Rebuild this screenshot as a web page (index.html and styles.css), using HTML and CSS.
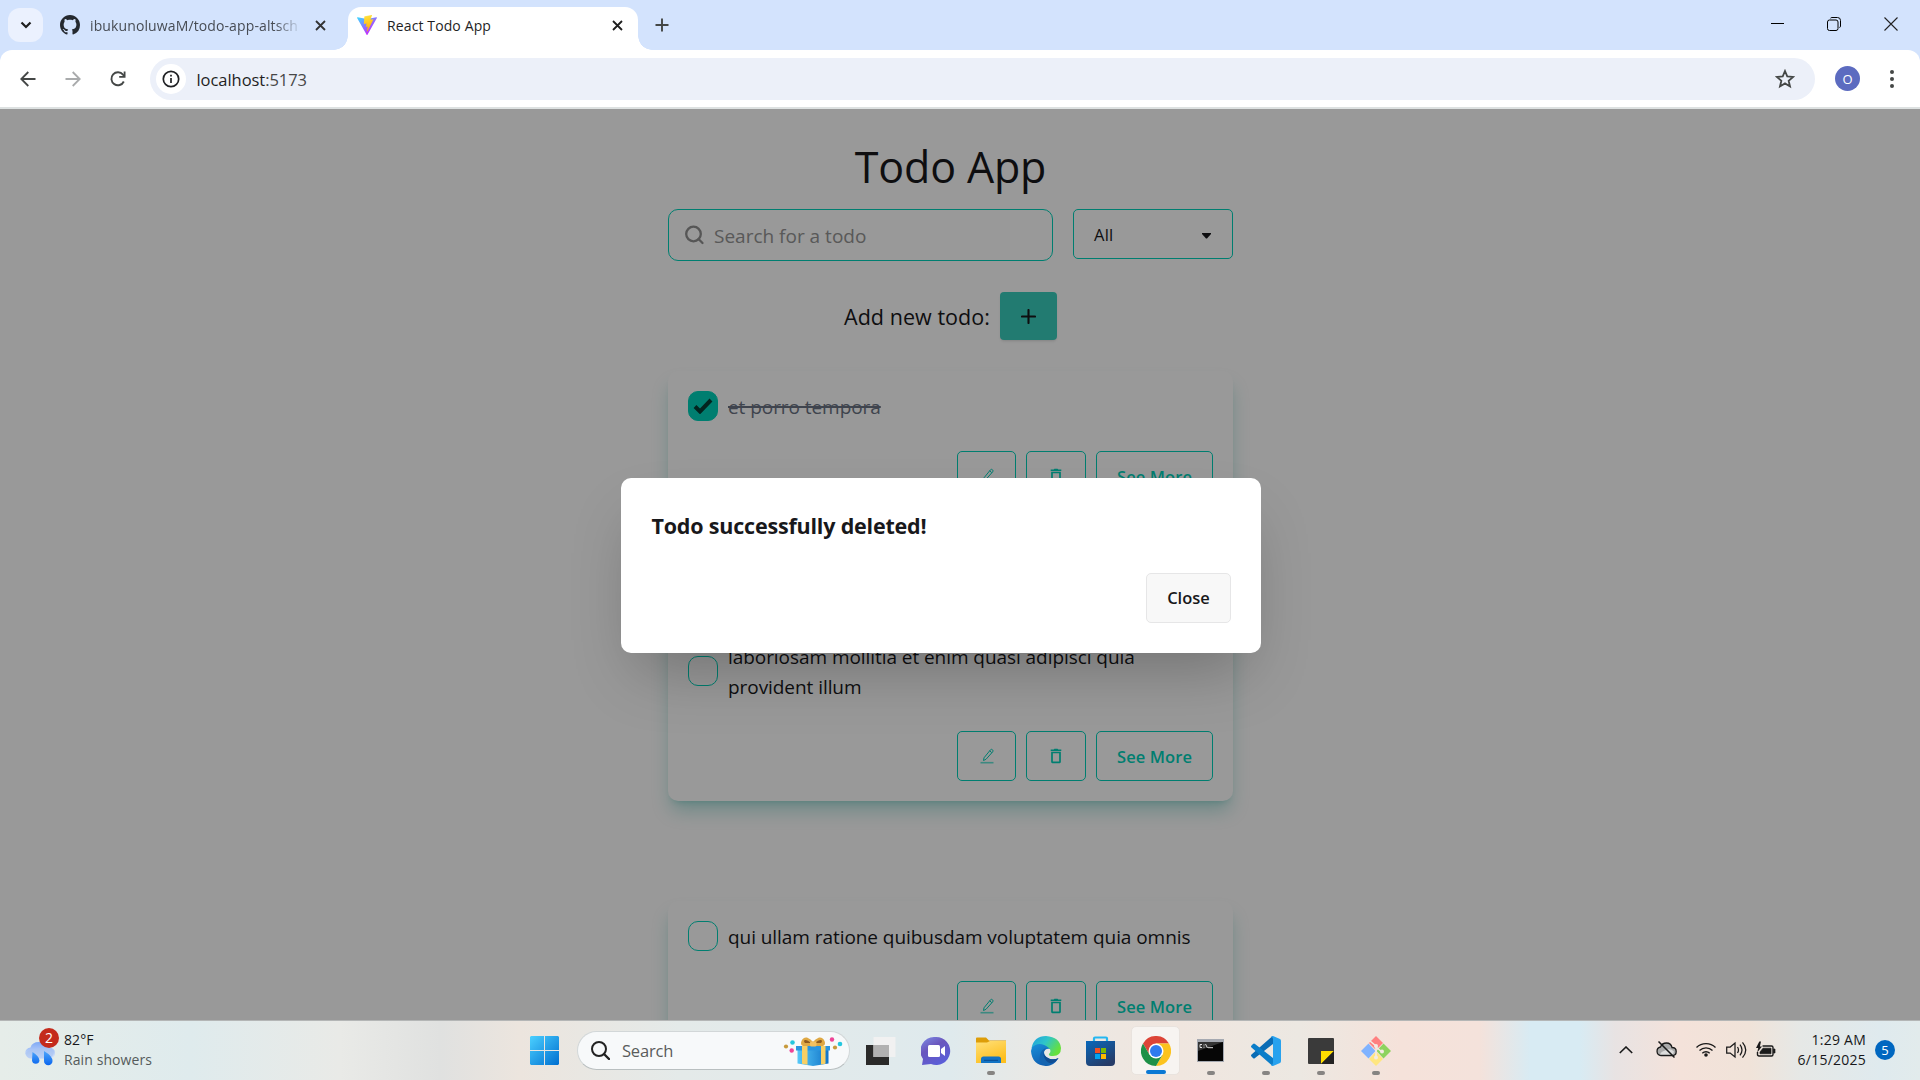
FILE: index.html
```html
<!DOCTYPE html>
<html lang="en">
<head>
<meta charset="utf-8">
<title>React Todo App</title>
<link rel="stylesheet" href="styles.css">
</head>
<body>
<div class="screen">
  <header class="browser">
    <div class="tabs">
      <button class="tab-search"><svg width="12" height="8" viewBox="0 0 12 8"><path d="M1.5 1.5 6 6l4.500-4.500" fill="none" stroke="#1f1f1f" stroke-width="2.200"/></svg></button>
      <div class="tab">
        <svg class="fav" width="20" height="20" viewBox="0 0 16 16"><path fill="#24292f" d="M8 0C3.580 0 0 3.580 0 8c0 3.540 2.290 6.530 5.470 7.590.4.070.55-.17.55-.38 0-.19-.01-.82-.01-1.490-2.010.37-2.530-.49-2.690-.94-.09-.23-.48-.94-.82-1.130-.28-.15-.68-.52-.01-.53.63-.01 1.080.58 1.230.82.72 1.210 1.870.87 2.330.66.07-.52.28-.87.51-1.070-1.780-.2-3.640-.89-3.640-3.950 0-.87.31-1.590.82-2.150-.08-.2-.36-1.020.08-2.120 0 0 .67-.21 2.200.82.64-.18 1.320-.27 2-.27s1.360.09 2 .27c1.530-1.040 2.200-.82 2.200-.82.44 1.100.16 1.920.08 2.120.51.56.82 1.270.82 2.150 0 3.070-1.870 3.750-3.650 3.950.29.25.54.73.54 1.480 0 1.070-.01 1.930-.01 2.200 0 .21.15.46.55.38A8 8 0 0 0 16 8c0-4.420-3.580-8-8-8z"/></svg>
        <span class="tab-title t-gh">ibukunoluwaM/todo-app-altsch</span>
        <svg class="x" width="11" height="11" viewBox="0 0 11 11"><path d="m1 1 9 9m0-9-9 9" stroke="#333" stroke-width="1.800"/></svg>
      </div>
      <div class="tab active">
        <svg class="fav" width="20" height="20" viewBox="0 0 256 257"><defs><linearGradient id="va" x1="0" x2=".6" y1=".1" y2=".85"><stop stop-color="#41d1ff"/><stop offset="1" stop-color="#bd34fe"/></linearGradient><linearGradient id="vb" x1=".4" x2=".55" y1="0" y2="1"><stop stop-color="#ffea83"/><stop offset=".1" stop-color="#ffdd35"/><stop offset="1" stop-color="#ffa800"/></linearGradient></defs><path fill="url(#va)" d="M255 38 134 254c-2 5-9 5-11 0L.800 38c-3-5 2-11 7-10l120 22q1 0 2 0L248 28c6-1 10 5 7 10z"/><path fill="url(#vb)" d="m185 0-88 17c-2 0-3 2-3 3l-6 92c0 2 2 4 5 4l24-6c3 0 5 2 4 4l-7 36c-1 2 1 5 4 4l15-5c3 0 5 2 4 5l-11 55c-1 4 4 5 6 2l76-151c1-2-1-5-4-5l-26 5c-2 1-4-2-3-4l17-53c1-2-1-4-3-3z"/></svg>
        <span class="tab-title t-react">React Todo App</span>
        <svg class="x" width="11" height="11" viewBox="0 0 11 11"><path d="m1 1 9 9m0-9-9 9" stroke="#1f1f1f" stroke-width="1.800"/></svg>
      </div>
      <svg class="plus" width="14" height="14" viewBox="0 0 14 14"><path d="M7 .5v13M.5 7h13" stroke="#444746" stroke-width="1.900"/></svg>
      <div class="win">
        <svg width="14" height="14" viewBox="0 0 14 14"><path d="M0 6.500h13" stroke="#000"/></svg>
        <svg width="14" height="14" viewBox="0 0 14 14"><path d="M.5 5a2 2 0 0 1 2-2H9a2 2 0 0 1 2 2v6.500a2 2 0 0 1-2 2H2.500a2 2 0 0 1-2-2zM3.500 1.200Q4 .5 5 .5h5.500a3 3 0 0 1 3 3V9q0 1-1 1.700" fill="none" stroke="#000"/></svg>
        <svg width="14" height="14" viewBox="0 0 14 14"><path d="m.5.5 13 13m0-13-13 13" stroke="#222" stroke-width="1.100"/></svg>
      </div>
    </div>
    <div class="toolbar">
      <svg class="nav" width="16" height="16" viewBox="0 0 16 16"><path d="M15.500 8H1.500M8.300 1 1.300 8l7 7" fill="none" stroke="#444746" stroke-width="1.800"/></svg>
      <svg class="nav" width="16" height="16" viewBox="0 0 16 16"><path d="M.5 8h14M7.700 1l7 7-7 7" fill="none" stroke="#a9abac" stroke-width="1.800"/></svg>
      <svg class="nav" width="16" height="16" viewBox="0 0 16 16"><path d="M13.800 10.500A6.500 6.500 0 1 1 13 3.700l1.500 1.800" fill="none" stroke="#444746" stroke-width="1.900"/><path d="M15.500.5v6.300H9.200V5h4.500V.5z" fill="#444746"/></svg>
      <div class="omnibox">
        <span class="info"><svg width="18" height="18" viewBox="0 0 18 18"><circle cx="9" cy="9" r="7.700" fill="none" stroke="#202124" stroke-width="1.700"/><path d="M9 8v5M9 4.800v1.800" stroke="#202124" stroke-width="1.700"/></svg></span>
        <span class="url">localhost<span class="port">:5173</span></span>
        <svg class="star" width="20" height="20" viewBox="0 0 20 20"><path d="m10 2 2.250 5.400 5.850.5-4.450 3.850 1.350 5.700L10 14.400l-5 3.050 1.350-5.700L1.900 7.900l5.850-.5z" fill="none" stroke="#444746" stroke-width="1.800"/></svg>
      </div>
      <span class="avatar">O</span>
      <svg class="dots" width="4" height="18" viewBox="0 0 4 18"><g fill="#444746"><circle cx="2" cy="2" r="2"/><circle cx="2" cy="9" r="2"/><circle cx="2" cy="16" r="2"/></g></svg>
    </div>
  </header>

  <main class="page">
    <div class="content">
      <h1>Todo App</h1>
      <div class="filters">
        <label class="search">
          <svg width="20" height="20" viewBox="0 0 20 20"><circle cx="8.500" cy="9" r="7.300" fill="none" stroke="#8f8f8f" stroke-width="2.300"/><path d="m13.500 14 4 4" stroke="#8f8f8f" stroke-width="2.300" stroke-linecap="round"/></svg>
          <span class="placeholder">Search for a todo</span>
        </label>
        <div class="select"><span>All</span><svg class="caret" width="9" height="6" viewBox="0 0 9 6"><path d="M0 0h9v1L5 5.500H4L0 1z" fill="#18181b"/></svg></div>
      </div>
      <div class="add"><span>Add new todo:</span><button class="btn-add"><svg width="15" height="15" viewBox="0 0 15 15"><path d="M7.500 1v13M1 7.500h13" stroke="#18181b" stroke-width="2.100" stroke-linecap="round"/></svg></button></div>

      <article class="card">
        <div class="row"><span class="check on"><svg width="20" height="16" viewBox="0 0 20 16"><path d="m2 8.500 5 5L18 2" fill="none" stroke="#053c35" stroke-width="4"/></svg></span><p class="done">et porro tempora</p></div>
        <div class="actions">
          <button class="btn edit"><svg class="ic" viewBox="0 0 14 16"><use href="#pen"/></svg></button>
          <button class="btn"><svg class="ic" viewBox="0 0 14 16"><use href="#bin"/></svg></button>
          <button class="btn more">See More</button>
        </div>
      </article>
      <article class="card">
        <div class="row"><span class="check"></span><p>laboriosam mollitia et enim quasi adipisci quia<br>provident illum</p></div>
        <div class="actions">
          <button class="btn edit"><svg class="ic" viewBox="0 0 14 16"><use href="#pen"/></svg></button>
          <button class="btn"><svg class="ic" viewBox="0 0 14 16"><use href="#bin"/></svg></button>
          <button class="btn more">See More</button>
        </div>
      </article>
      <article class="card">
        <div class="row"><span class="check"></span><p>qui ullam ratione quibusdam voluptatem quia omnis</p></div>
        <div class="actions">
          <button class="btn edit"><svg class="ic" viewBox="0 0 14 16"><use href="#pen"/></svg></button>
          <button class="btn"><svg class="ic" viewBox="0 0 14 16"><use href="#bin"/></svg></button>
          <button class="btn more">See More</button>
        </div>
      </article>
    </div>
    <div class="overlay">
      <div class="modal">
        <h2>Todo successfully deleted!</h2>
        <div class="modal-actions"><button class="close">Close</button></div>
      </div>
    </div>
  </main>

  <footer class="taskbar">
    <div class="weather">
      <div class="weather-ic">
        <svg width="32" height="28" viewBox="0 0 32 28"><defs><linearGradient id="cl" x2="0" y2="1"><stop stop-color="#7fa9f5"/><stop offset="1" stop-color="#dbe6fa"/></linearGradient><linearGradient id="dr" x2="0" y2="1"><stop stop-color="#4fa6fb"/><stop offset="1" stop-color="#0a66ee"/></linearGradient></defs><path d="M7 19.500a5.500 5.500 0 0 1-.5-11Q8 3 15 3t9 5.500q7 0 7 5.500t-6 5.500z" fill="url(#cl)"/><path d="M1.500 14.500q3-5 9.500-3 3-4 8-2 7-3 11 3-1 7-6 7H7q-4 0-5.500-5z" fill="#a9c3f0" opacity=".6"/><path d="M8.500 13q7 4.500 7 8.500a3.800 3.800 0 0 1-7.500 0zM20 12q8.500 5 8.500 10a4.200 4.200 0 0 1-8.500 0z" fill="url(#dr)"/></svg>
        <span class="alert">2</span>
      </div>
      <div class="weather-txt"><span>82°F</span><span class="rain">Rain showers</span></div>
    </div>

    <div class="apps">
      <span class="app"><svg width="29" height="29" viewBox="0 0 29 29"><defs><linearGradient id="wn" x1="0" y1="0" x2="29" y2="29" gradientUnits="userSpaceOnUse"><stop stop-color="#4bd0ff"/><stop offset="1" stop-color="#006fd0"/></linearGradient></defs><path fill="url(#wn)" d="M1 0h13v14H0V1zM15 0h13l1 1v13H15zM0 15h14v14H1l-1-1zM15 15h14v13l-1 1H15z"/></svg></span>
      <div class="tb-search">
        <svg width="19" height="19" viewBox="0 0 19 19"><circle cx="8" cy="8" r="7" fill="none" stroke="#222" stroke-width="2"/><path d="m13 13 5 5" stroke="#222" stroke-width="2.400" stroke-linecap="round"/></svg>
        <span class="tb-label">Search</span>
        <svg class="gift" width="60" height="30" viewBox="0 0 60 30"><defs><linearGradient id="gf"><stop stop-color="#56c8f8"/><stop offset="1" stop-color="#1173c8"/></linearGradient></defs><path d="M14.500 10h31v17.500L30 30l-15.500-2.500z" fill="url(#gf)"/><path d="M13 10h34v4.500H13z" fill="#2a95e0"/><path d="M19 10h5.500v18.700l-5.500-.9zM38 10h4.500v17.800l-4.500.7z" fill="#f8cf63"/><path d="M30 10H20q-3-1-1.500-5Q20 1 24 1.500q4 1.500 6 4.500 2-3 6-4.500 4-.5 5.500 3.500 1.500 4-1.500 5z" fill="#dfa844"/><path d="M28 7q-4-3.500-6-3t0 3zM32 7q4-3.500 6-3t0 3z" fill="#8f5a1e"/><rect x="27" y="5.500" width="6.500" height="5" rx="1.500" fill="#f3c060"/><g fill="#25c7df"><circle cx="9.500" cy="6.500" r="2.300"/><circle cx="57" cy="8" r="2.300"/></g><g fill="#ee4497"><circle cx="8.700" cy="14.500" r="2.200"/><circle cx="49" cy="3.500" r="2.200"/></g><g fill="#c79a3c"><circle cx="3" cy="10.500" r="2.100"/><circle cx="52" cy="11.500" r="2.100"/></g></svg>
      </div>
      <span class="app"><svg width="30" height="28" viewBox="0 0 30 28"><path d="M0 8h23v20H0z" fill="#2a2a29"/><path d="M7.500 0h22v20h-22z" fill="#f1f1f1"/><path d="M7.500 8H23v12H7.500z" fill="#b1b1b1"/></svg></span>
      <span class="app"><svg width="30" height="30" viewBox="0 0 30 30"><defs><linearGradient id="ct" x2=".6" y2="1"><stop stop-color="#7f8ee6"/><stop offset=".45" stop-color="#6a56bd"/><stop offset="1" stop-color="#5a5ed8"/></linearGradient></defs><path d="M15 1a14 14 0 1 1-5 27L1 29l1-6A14 14 0 0 1 15 1z" fill="url(#ct)"/><rect x="7" y="9" width="12" height="12" rx="1.500" fill="#fff"/><path d="m20 13 4-3v10l-4-3z" fill="#fff"/></svg></span>
      <span class="app run"><svg width="30" height="27" viewBox="0 0 30 27"><defs><linearGradient id="fo" x2=".5" y2="1"><stop stop-color="#ffe07a"/><stop offset="1" stop-color="#fdbf1e"/></linearGradient></defs><path d="M0 1.500Q0 .5 1 .5h9L13 3.500H30v6H0z" fill="#dd9d08"/><path d="M0 5.500h11L14 4h16v22H0z" fill="url(#fo)"/><path d="M5 26v-4q0-2.500 2.500-2.500h15Q25 19.500 25 22v4z" fill="#1273c4"/><path d="M8 23.300h14" stroke="#0a4a90"/></svg></span>
      <span class="app"><svg width="30" height="30" viewBox="0 0 30 30"><defs><linearGradient id="e1" x1="0" x2="1" y2=".5"><stop stop-color="#1f9ee0"/><stop offset=".5" stop-color="#2fc5c9"/><stop offset="1" stop-color="#66e03c"/></linearGradient><linearGradient id="e2" x2=".5" y2="1"><stop stop-color="#1a94dc"/><stop offset="1" stop-color="#0f5cb0"/></linearGradient></defs><path d="M0 15Q1 6 10 6q8 0 10 7-6-1-7 3 0 5 6 7 5 1 8.500-1Q23 30 15 30 1 29 0 15z" fill="url(#e2)"/><path d="M.500 12Q3 0 15 0q14 1 15 12 0 8-8 8-5 0-4-2 3-3 0-6Q8 4 .500 12z" fill="url(#e1)"/><path d="M13 14q-4 8 4 13 7 1 10.500-5-3.500 2-8.500 1-8-3-6-9z" fill="#104d92"/><path d="M15 30q-8-3-6-11 1-6 7-7-4 3-3.500 7 1.500 7 7.500 8.500-2 2-5 2.500z" fill="#1464b0"/></svg></span>
      <span class="app"><svg width="29" height="30" viewBox="0 0 29 30"><defs><linearGradient id="st" x2=".6" y2="1"><stop stop-color="#0868bb"/><stop offset="1" stop-color="#263c68"/></linearGradient></defs><path d="M8 6V2.500Q8 1.500 9 1.500h11q1 0 1 1V6" fill="none" stroke="#25b7f1" stroke-width="2.200"/><path d="M0 5h29v21q0 4-4 4H4q-4 0-4-4z" fill="url(#st)"/><path d="M9 12h5v5H9z" fill="#f25022"/><path d="M15 12h5v5h-5z" fill="#7fba00"/><path d="M9 18h5v5H9z" fill="#00a4ef"/><path d="M15 18h5v5h-5z" fill="#ffb900"/></svg></span>
      <span class="app current"><svg width="30" height="30" viewBox="0 0 30 30"><path d="M2 7.500A15 15 0 0 1 28 7.500H15L8.500 18.750z" fill="#dc4437"/><path d="M28 7.500A15 15 0 0 1 15 30L21.500 18.750 15 7.500z" fill="#fcc31e"/><path d="M2 7.500 8.500 18.750h13L15 30A15 15 0 0 1 2 7.500z" fill="#1e9048"/><circle cx="15" cy="15" r="7.500" fill="#fff"/><circle cx="15" cy="15" r="6" fill="#2f7bee"/></svg></span>
      <span class="app run"><svg width="27" height="23" viewBox="0 0 27 23"><path d="M0 0h27v23H0z" fill="#a5a9b1"/><path d="M1 3h25v19H1z" fill="#060606"/><path d="M1 3h25L1 12z" fill="#333"/><path d="M5 5.500H3v3h2M7 5.500v1m0 1.200v1M8.500 5l2 4M11 8.700h5" fill="none" stroke="#ddd"/></svg></span>
      <span class="app run"><svg width="30" height="30" viewBox="0 0 30 30"><path d="M22 0v8L4 22q-1 1-2 0L.5 20.500q-1-1 0-2L21 .5z" fill="#0a6cb5"/><path d="M22 30v-8L4 8Q3 7 2 8L.5 9.500q-1 1 0 2L21 29.500z" fill="#0c7ec9"/><path d="m22 0 7 3q1 .5 1 2v20q0 1.500-1 2l-7 3q-1.500 0-2-1 2 0 2-2V3q0-2-2-2 .5-1 2-1z" fill="#28a2ee"/></svg></span>
      <span class="app run"><svg width="26" height="26" viewBox="0 0 26 26"><rect width="26" height="26" rx="1" fill="#3a3a3a"/><path d="M13 13h13L13 26z" fill="#ffdd00"/><path d="M26 13v13H13z" fill="#222"/></svg></span>
      <span class="app run"><svg width="30" height="30" viewBox="0 0 30 30"><path d="m15 0 7 7-7 7-7-7z" fill="#ff8080"/><path d="m7.500 7.500 7 7.500-7 7.500L0 15z" fill="#80b3ff"/><path d="m22.500 7.500 7.500 7.500-7.500 7.500-7-7.500z" fill="#8dd35f"/><path d="m15 15.500 7 7.500-7 7-7-7z" fill="#ffe680"/><path d="m9 5 6 5v11m0-10 6 5" fill="none" stroke="#f3ebe4" stroke-width="1.600"/><g fill="#f3ebe4"><circle cx="15" cy="10" r="2"/><circle cx="15" cy="21.500" r="2"/><circle cx="21" cy="15.500" r="2"/></g></svg></span>
    </div>

    <div class="tray">
      <svg class="chev" width="14" height="8" viewBox="0 0 14 8"><path d="m.8 7 6.200-6 6.200 6" fill="none" stroke="#1a1a1a" stroke-width="1.600"/></svg>
      <svg class="cloud" width="21" height="17" viewBox="0 0 21 17"><path d="M5 14.500a4.300 4.300 0 0 1-.5-8.500Q6 2 10.500 2T16 6.500q4.200 0 4.200 4t-3.700 4z" fill="#aaa" stroke="#1a1a1a" stroke-width="1.300"/><path d="M4 13.500q1-3 5-4 5-3 9 1l-1 3z" fill="#dcdcdc"/><path d="m2.500.5 16 16" stroke="#1a1a1a" stroke-width="1.500"/></svg>
      <svg class="wifi" width="20" height="15" viewBox="0 0 20 15"><g fill="none" stroke="#1a1a1a" stroke-width="1.300"><path d="M.5 5.500a13.500 13.500 0 0 1 19 0M3.500 8.500a9.200 9.200 0 0 1 13 0M6.300 11.300a5.200 5.200 0 0 1 7.400 0"/></g><circle cx="10" cy="13" r="1.800" fill="#1a1a1a"/></svg>
      <svg class="vol" width="21" height="18" viewBox="0 0 21 18"><g fill="none" stroke="#1a1a1a" stroke-width="1.250"><path d="M.7 6h3.500L9 2v14l-4.800-4H.7z"/><path d="M11.500 6q2 3 0 6M14 3.700q4 5.300 0 10.600M16.500 1.300q6.500 7.700 0 15.400"/></g></svg>
      <svg class="bat" width="20" height="17" viewBox="0 0 20 17"><path d="M6.500 5H15.500q1.500 0 1.500 1.500v7q0 1.500-1.500 1.500H3q-1.500 0-1.500-1.500V11" fill="none" stroke="#1a1a1a" stroke-width="1.400"/><path d="M7 7.200h8v5.600H4V11zM17.500 8H19v4h-1.500z" fill="#1a1a1a" stroke="#1a1a1a" stroke-width=".7"/><path d="M3.300.5 0 7h2.200L1.200 11.500 6 5.500H3.900L5 .5z" fill="#1a1a1a"/></svg>
      <div class="clock"><span>1:29 AM</span><span>6/15/2025</span></div>
      <span class="count">5</span>
    </div>
  </footer>
</div>

<svg class="defs" width="0" height="0">
  <symbol id="pen" viewBox="0 0 14 16"><path d="M3.500 12.500 4 9.800 10.500 1.800q1-1 2 0t.2 2L6 11.300zM9.700 2.800l2 1.800" fill="none" stroke="currentColor"/><path d="M.5 14.700h13" stroke="currentColor" stroke-width="1.600" opacity=".6"/></symbol>
  <symbol id="bin" viewBox="0 0 14 16"><path d="M3 4.500h8V14q0 .3-.3.3H3.300Q3 14.300 3 14z" fill="none" stroke="currentColor" stroke-width="1.700"/><path d="M1.700 1.500h3L5.400.7h3.200l.7.8h3v1.500H1.700z" fill="currentColor"/></symbol>
</svg>
</body>
</html>
```
FILE: styles.css
```css
* { box-sizing: border-box; }
body { margin: 0; font-family: "Open Sans", "Noto Sans", sans-serif; color: #18181b; overflow: hidden; }
button { font: inherit; color: inherit; letter-spacing: inherit; padding: 0; border: 0; background: none; }
svg { display: block; flex: none; }
h1, h2, p { margin: 0; font-weight: 400; }
.defs { position: absolute; }
.screen { width: 1920px; height: 1080px; display: flex; flex-direction: column; overflow: hidden; }

/* browser chrome */
.browser { height: 109px; flex: none; background: #d3e3fd; border-bottom: 2px solid #dde1e1; }
.tabs { height: 50px; display: flex; align-items: flex-start; padding: 7px 22px 0 8px; }
.tab-search { width: 35px; height: 34px; margin-top: 1px; border-radius: 12px; background: #ebf1fe; display: grid; place-items: center; }
.tab { height: 43px; width: 290px; display: flex; align-items: center; padding: 0 14px 7px 10px; margin-left: 7px; }
.tab + .tab { margin-left: 8px; }
.tab-title { font-size: 14px; letter-spacing: .117px; margin-left: 10px; padding-top: 1px; white-space: nowrap; color: #1f1f1f; line-height: 20px; }
.t-gh { color: #474c54; -webkit-mask-image: linear-gradient(90deg, #000 185px, transparent 212px); mask-image: linear-gradient(90deg, #000 185px, transparent 212px); }
.x { margin-left: auto; }
.tab.active { background: #fff; border-radius: 13px 13px 0 0; position: relative; padding-right: 15px; }
.tab.active .fav { margin-left: -1px; }
.tab.active::before, .tab.active::after { content: ""; position: absolute; bottom: 0; width: 14px; height: 14px; }
.tab.active::before { left: -14px; background: radial-gradient(circle at 0 0, transparent 13.5px, #fff 14px); }
.tab.active::after { right: -14px; background: radial-gradient(circle at 100% 0, transparent 13.5px, #fff 14px); }
.plus { margin: 11px 0 0 17px; }
.win { margin: 10px 0 0 auto; display: flex; gap: 43px; }
.win svg:first-child { margin-right: -1px; }
.toolbar { height: 57px; background: #fff; border-radius: 12px 12px 0 0; display: flex; align-items: center; padding: 0 26px 0 20px; }
.nav { margin-right: 29px; }
.omnibox { flex: 1; height: 42px; margin-left: -5px; border-radius: 21px; background: #ecf0f9; display: flex; align-items: center; padding: 0 20px 0 6px; }
.info { width: 30px; height: 30px; border-radius: 50%; background: #fff; display: grid; place-items: center; }
.url { margin-left: 10.500px; padding-top: 1px; font-size: 16.5px; letter-spacing: -.05px; color: #1f1f1f; }
.port { color: #474747; }
.star { margin-left: auto; }
.avatar { width: 25px; height: 25px; margin-left: 20px; border-radius: 50%; background: #5c6bc0; color: #fff; font-size: 13px; display: grid; place-items: center; }
.dots { margin-left: 30px; }

/* page */
.page { flex: 1; min-height: 0; position: relative; overflow: hidden; background: #fff; }
.content { width: 565px; margin-left: 668px; padding-top: 28px; }
h1 { font-size: 43px; line-height: 60px; text-align: center; letter-spacing: -.15px; }
.filters { display: flex; align-items: flex-start; gap: 20px; margin-top: 12px; }
.search { width: 385px; height: 52px; border: 1.250px solid #00d3bb; border-radius: 10px; display: flex; align-items: center; gap: 9px; padding: 0 15px 0 16px; font-size: 19px; color: #949494; }
.placeholder { padding-top: 1px; }
.select { width: 160px; height: 50px; border: 1.250px solid #00d3bb; border-radius: 5px; display: flex; align-items: center; justify-content: space-between; padding: 0 21px 0 20px; font-size: 16.500px; letter-spacing: .2px; }
.caret { margin-top: 3px; }
.add { display: flex; align-items: center; justify-content: center; gap: 10px; margin: 31px 0; font-size: 21.5px; letter-spacing: .052px; }
.btn-add { width: 57px; height: 48px; border-radius: 4px; background: #3acdbc; display: grid; place-items: center; box-shadow: 0 2px 3px -1px rgba(0,0,0,.15); }
.card { padding: 20px; border-radius: 10px; margin-bottom: 100px; box-shadow: 0 12.500px 18.750px -3.750px rgba(0,160,145,.3), 0 5px 7.500px -5px rgba(0,160,145,.3); }
.row { display: flex; align-items: center; gap: 10px; margin-bottom: 30px; font-size: 19px; line-height: 30px; letter-spacing: -.06px; }
.row p { padding-top: 1px; margin-bottom: -1px; }
.check { width: 30px; height: 30px; flex: none; border: 1.250px solid #00d3bb; border-radius: 10px; display: grid; place-items: center; }
.check.on { background: #00d3bb; }
.done { color: #6a7282; text-decoration: line-through; text-decoration-thickness: 2px; }
.actions { display: flex; justify-content: flex-end; gap: 10px; }
.btn { width: 60px; height: 50px; border: 1.250px solid #00d3bb; border-radius: 5px; color: #00d3bb; display: grid; place-items: center; }
.btn.edit { width: 59px; }
.btn.more { width: 117px; font-size: 16.5px; font-weight: 600; letter-spacing: .09px; }
.ic { width: 14px; height: 16px; }

/* dialog */
.overlay { position: absolute; inset: 0; background: rgba(0,0,0,.4); display: flex; align-items: center; justify-content: center; padding: 2px 39px 0 0; }
.modal { width: 640px; height: 175px; background: #fff; border-radius: 10px; padding: 30px; box-shadow: 0 31px 62px -15px rgba(0,0,0,.25); }
h2 { font-size: 21.5px; font-weight: 700; line-height: 35px; letter-spacing: -.194px; padding-left: 1px; }
.modal-actions { display: flex; justify-content: flex-end; margin-top: 30px; }
.close { width: 85px; height: 50px; border: 1.250px solid #e6e6e7; border-radius: 5px; background: #f8f8f8; font-size: 16.5px; font-weight: 600; display: grid; place-items: center; padding: 0 0 2px 1px; }

/* taskbar */
.taskbar { height: 60px; flex: none; border-top: 1px solid #b4b6b6; display: flex; align-items: center; background: linear-gradient(90deg, #e6ede9 0, #dfebed 190px, #e9eae7 340px, #e0e1e0 440px, #ece5de 520px, #e4eae9 680px, #dfeaed 950px, #ece8e3 1060px, #f0e6df 1180px, #ece8e2 1300px, #f5e2da 1400px, #f4e2db 1480px, #d8ebf3 1530px, #d8ebf3 1580px, #e8e3e3 1615px, #f4e2da 1680px, #f0e3d9 1750px, #e6e8e6 1800px, #dfeaee 1880px, #e2ebec 1920px); }
.weather { width: 517px; flex: none; padding: 0 0 2px 24px; display: flex; gap: 8px; }
.weather-ic { position: relative; padding-top: 9px; width: 32px; }
.alert { position: absolute; left: 15px; top: -2px; width: 20px; height: 20px; border-radius: 50%; background: #c42b1c; color: #fff; font-size: 14px; display: grid; place-items: center; }
.weather-txt, .clock { display: flex; flex-direction: column; font-size: 14px; line-height: 20px; letter-spacing: .09px; }
.weather-txt span, .clock span { width: max-content; }
.rain { color: #555b5b; }
.apps { display: flex; align-items: center; }
.app { width: 55px; height: 58px; display: grid; place-items: center; position: relative; }
.run::after, .current::after { content: ""; position: absolute; bottom: 5px; left: 23.500px; width: 8px; height: 4px; border-radius: 2px; background: #868482; }
.current { width: 49px; height: 49px; margin: 0 3px; border-radius: 5px; background: #f7f4f1; border: 1px solid #e9e3de; }
.current::after { left: 13.500px; width: 20px; bottom: 0; background: #0a78d4; }
.tb-search { width: 273px; height: 39px; margin: 0 3px 0 5px; border: 1px solid #d2d7d8; border-bottom-color: #b9bfc0; border-radius: 20px; background: #f7f9fa; display: flex; align-items: center; padding: 0 6px 0 13px; font-size: 16.5px; letter-spacing: -.2px; color: #5a5c5c; }
.tb-label { margin-left: 12px; }
.gift { margin-left: auto; }
.tray { margin-left: auto; padding: 0 25px 2px 0; display: flex; align-items: center; }
.cloud { margin-left: 23px; }
.wifi { margin-left: 19px; }
.vol { margin-left: 10px; }
.bat { margin-left: 9px; }
.clock { width: 90px; align-items: flex-end; letter-spacing: .24px; }
.count { width: 20px; height: 20px; margin-left: 9px; border-radius: 50%; background: #0067c0; color: #fff; font-size: 13px; display: grid; place-items: center; }
```
